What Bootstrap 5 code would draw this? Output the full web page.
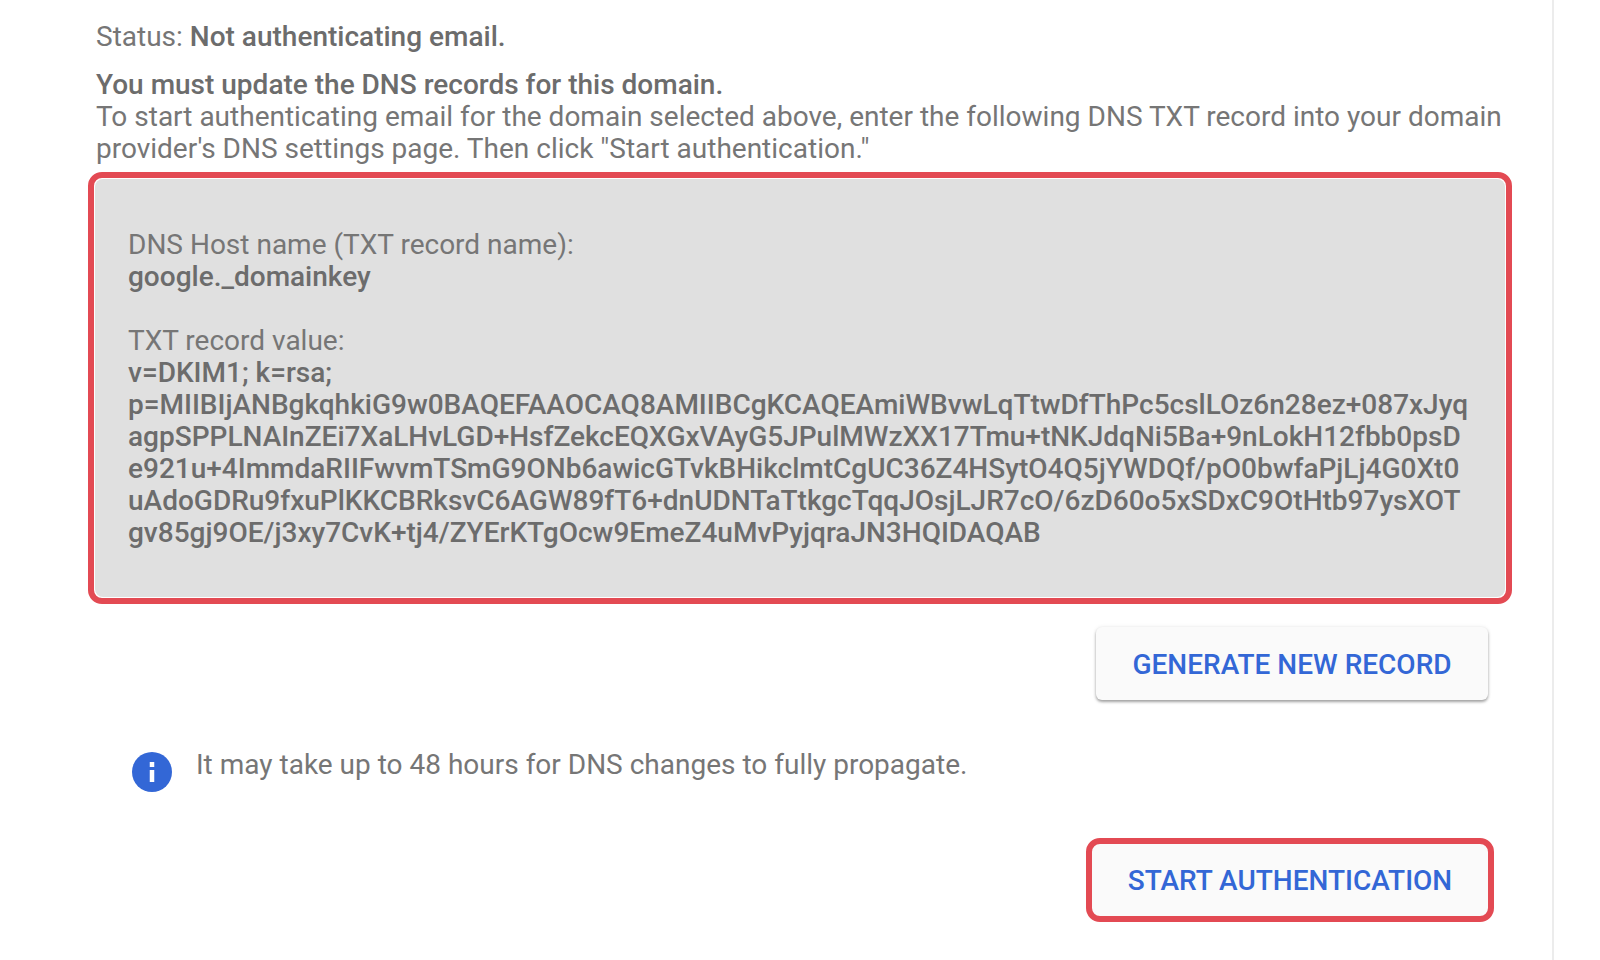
<!doctype html>
<html lang="en">
<head>
<meta charset="utf-8">
<title>Authenticate email</title>
<link href="https://cdn.jsdelivr.net/npm/bootstrap@5.3.0/dist/css/bootstrap.min.css" rel="stylesheet">
<style>
html, body { height: 100%; overflow: hidden; }
body { background: #fff; font-family: Roboto, "Liberation Sans", sans-serif; font-size: 28px; line-height: 32px; color: #767676; }
.page-pane { width: 1554px; height: 960px; border-right: 2px solid #ececec; padding: 21px 40px 0 88px; }
.intro-text { padding-left: 8px; }
.intro-text p { margin-bottom: 16px; }
.intro-text p:last-child { margin-bottom: 7px; }
.strong-text { font-weight: 500; color: #6c6c6c; }
.record-frame { border: 6px solid #e34a53; border-radius: 14px; height: 432px; background: #fff; padding: 1px; }
.record-inner { background: #e0e0e0; border-radius: 8px; height: 100%; padding: 50px 32px 0 33px; white-space: nowrap; }
.gen-row { padding: 23px 24px 0 0; }
.mat-btn { background: #fafafa; color: #3367d6; font: 500 28px/32px Roboto, sans-serif; border: 0; border-radius: 6px; }
.mat-btn:hover, .mat-btn:active { background: #fafafa !important; color: #3367d6 !important; }
.gen-btn { width: 392px; height: 73px; padding-top: 9px; box-shadow: 0 2px 3px rgba(0,0,0,.35), 0 0 4px rgba(0,0,0,.08); }
.start-btn { width: 408px; height: 84px; padding-top: 8px; border: 6px solid #e34a53; border-radius: 14px; }
.info-row { padding: 49px 0 0 44px; gap: 24px; }
.info-glyph { width: 40px; height: 40px; flex: none; margin-top: 3px; }
.start-row { padding: 46px 18px 0 0; }
</style>
</head>
<body>
<div class="page-pane">
  <div class="intro-text">
    <p>Status: <span class="strong-text">Not authenticating email.</span></p>
    <p><span class="strong-text">You must update the DNS records for this domain.</span><br>To start authenticating email for the domain selected above, enter the following DNS TXT record into your domain provider's DNS settings page. Then click "Start authentication."</p>
  </div>
  <div class="record-frame">
    <div class="record-inner">
      DNS Host name (TXT record name):<br>
      <span class="strong-text">google._domainkey</span><br><br>
      TXT record value:<br>
      <span class="strong-text">v=DKIM1; k=rsa;<br>
      p=MIIBIjANBgkqhkiG9w0BAQEFAAOCAQ8AMIIBCgKCAQEAmiWBvwLqTtwDfThPc5cslLOz6n28ez+087xJyq<br>
      agpSPPLNAInZEi7XaLHvLGD+HsfZekcEQXGxVAyG5JPulMWzXX17Tmu+tNKJdqNi5Ba+9nLokH12fbb0psD<br>
      e921u+4ImmdaRIIFwvmTSmG9ONb6awicGTvkBHikclmtCgUC36Z4HSytO4Q5jYWDQf/pO0bwfaPjLj4G0Xt0<br>
      uAdoGDRu9fxuPlKKCBRksvC6AGW89fT6+dnUDNTaTtkgcTqqJOsjLJR7cO/6zD60o5xSDxC9OtHtb97ysXOT<br>
      gv85gj9OE/j3xy7CvK+tj4/ZYErKTgOcw9EmeZ4uMvPyjqraJN3HQIDAQAB</span>
    </div>
  </div>
  <div class="d-flex justify-content-end gen-row">
    <button type="button" class="btn mat-btn gen-btn">GENERATE NEW RECORD</button>
  </div>
  <div class="d-flex info-row">
    <svg class="info-glyph" viewBox="0 0 40 40" aria-hidden="true"><circle cx="20" cy="20" r="20" fill="#3367d6"/><rect x="17.75" y="10" width="4.5" height="5" fill="#fff"/><rect x="17.75" y="18" width="4.5" height="12" fill="#fff"/></svg>
    <div>It may take up to 48 hours for DNS changes to fully propagate.</div>
  </div>
  <div class="d-flex justify-content-end start-row">
    <button type="button" class="btn mat-btn start-btn">START AUTHENTICATION</button>
  </div>
</div>
<script src="https://cdn.jsdelivr.net/npm/bootstrap@5.3.0/dist/js/bootstrap.bundle.min.js"></script>
</body>
</html>
